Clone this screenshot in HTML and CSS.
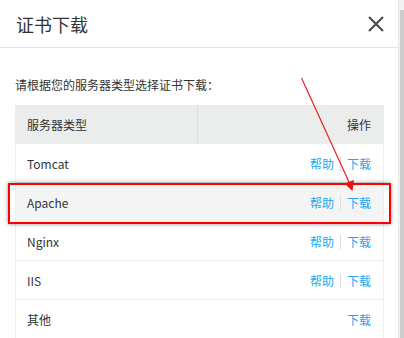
FILE: index.html
```html
<!DOCTYPE html>
<html>
	<head>
		<meta charset="UTF-8">
		<title>证书下载</title>
		<link rel="stylesheet" href="styles.css">
	</head>
	<body>
		<div class="page">
			<div class="dialog">
				<div class="dlg-head">
					<h3>证书下载</h3>
					<span class="close">
						<svg width="16" height="16" viewBox="0 0 16 16"><path d="M1 1L15 15M15 1L1 15" stroke="#4a4a4a" stroke-width="2" fill="none"/></svg>
					</span>
				</div>
				<div class="dlg-body">
					<p class="tip">请根据您的服务器类型选择证书下载：</p>
					<table class="list">
						<tr class="head">
							<th class="c1">服务器类型</th>
							<th class="c2">操作</th>
						</tr>
						<tr>
							<td class="c1">Tomcat</td>
							<td class="c2"><a>帮助</a><i></i><a>下载</a></td>
						</tr>
						<tr class="hover">
							<td class="c1">Apache</td>
							<td class="c2"><a>帮助</a><i></i><a>下载</a></td>
						</tr>
						<tr>
							<td class="c1">Nginx</td>
							<td class="c2"><a>帮助</a><i></i><a>下载</a></td>
						</tr>
						<tr>
							<td class="c1">IIS</td>
							<td class="c2"><a>帮助</a><i></i><a>下载</a></td>
						</tr>
						<tr>
							<td class="c1">其他</td>
							<td class="c2"><a>下载</a></td>
						</tr>
					</table>
				</div>
			</div>
			<div class="scroll"><span></span></div>
			<!-- 标注 -->
			<div class="mark"></div>
			<svg class="arrow" width="404" height="338" viewBox="0 0 404 338">
				<line x1="301.5" y1="78" x2="349" y2="182" stroke="#f01010" stroke-width="1.1"/>
				<path d="M352.5 191L344.5 183.5L354 180Z" fill="#f01010"/>
			</svg>
		</div>
	</body>
</html>
```

FILE: styles.css
```css
* {margin: 0;padding: 0;box-sizing: border-box;}
body {background: #fff;font-family: "Noto Sans CJK SC", sans-serif;color: #333;}
.page {position: relative;width: 404px;height: 338px;overflow: hidden;display: flex;}
.dialog {flex: 1;border-right: 1px solid #e8e8e8;background: #fff;}
.dlg-head {height: 48px;border-bottom: 1px solid #e3e3e3;display: flex;align-items: center;justify-content: space-between;padding: 0 14px 0 16px;}
.dlg-head h3 {font-size: 18px;font-weight: normal;color: #333;line-height: 24px;}
.close {display: flex;width: 16px;height: 16px;}
.dlg-body {padding: 27px 14px 0 15px;}
.tip {font-size: 12px;line-height: 20px;height: 30px;}
.list {width: 100%;border-collapse: collapse;font-size: 12px;}
.list th, .list td {height: 39px;border: 1px solid #eeeeee;font-weight: normal;}
.list tr.head th {height: 38px;background: #ebecec;border-color: #ebecec;}
.list tr.head th.c1 {border-right: 1px solid #dcdcdc;}
.list .c1 {width: 182px;text-align: left;padding-left: 11px;}
.list .c2 {text-align: right;padding-right: 12px;}
.list td.c1 {border-right: none;}
.list td.c2 {border-left: none;}
.list tr.hover td {background: #f4f4f4;}
.list a {color: #22a6f2;cursor: pointer;}
.list i {display: inline-block;width: 1px;height: 14px;background: #dddddd;margin: 0 6px;vertical-align: -2px;}
.scroll {width: 5px;background: #f2f2f2;padding-top: 10px;}
.scroll span {display: block;height: 100%;width: 4px;margin-left: 1px;background: #cdcdcd;}
.mark {position: absolute;left: 8px;top: 183px;width: 383px;height: 41px;border: 2px solid #f00;box-shadow: 0 0 4px rgba(0,0,0,.45);}
.arrow {position: absolute;left: 0;top: 0;pointer-events: none;}
```
